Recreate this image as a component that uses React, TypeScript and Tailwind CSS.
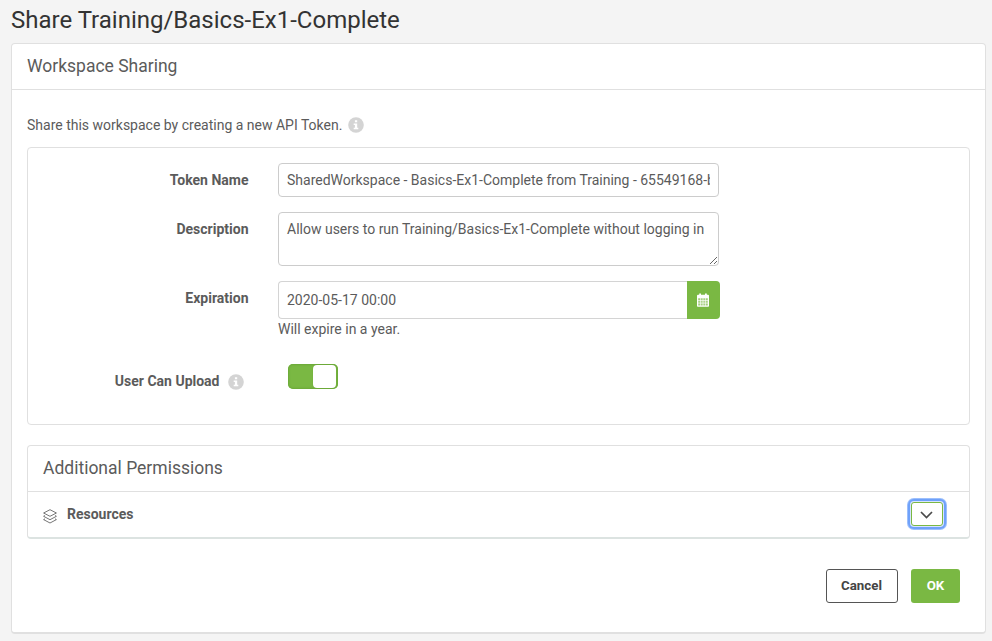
import React from "react";

function InfoIcon() {
  return (
    <svg width="16" height="16" viewBox="0 0 16 16" className="block">
      <circle cx="8" cy="8" r="7.8" fill="#d4d4d4" />
      <path d="M6.9 3.2h2.3v2H6.9zM5.7 6.5h3.5v4.3h1.1v1.5H5.7v-1.5h1.2V8H5.7z" fill="#fff" />
    </svg>
  );
}

function CalendarIcon() {
  return (
    <svg width="12" height="14" viewBox="0 0 12 14" className="block">
      <path
        fill="#fff"
        fillRule="evenodd"
        d="M1 1.8h1.200V.4h1.800v1.400h4V.4h1.800v1.400H11q1 0 1 1V13q0 .8-.8.8H.8Q0 13.800 0 13V2.800q0-1 1-1zM1.200 5.200v7.400h9.600V5.200z"
      />
      <path stroke="#fff" strokeWidth=".7" fill="none" d="M3.600 5v8M6 5v8M8.400 5v8M1 7.600h10M1 10.100h10" />
      <path fill="#fff" fillOpacity=".3" d="M1 5h10v8H1z" />
    </svg>
  );
}

function LayersIcon() {
  return (
    <svg width="14" height="15" viewBox="0 0 14 15" className="block" fill="none" stroke="#666" strokeWidth=".9" strokeLinejoin="round">
      <path d="M7 .7 13.400 4 7 7.300.6 4z" />
      <path d="M2 6.500.6 7.300 7 10.700l6.400-3.400L12 6.500" />
      <path d="M2 9.800l-1.400.8L7 14l6.400-3.400-1.400-.8" />
    </svg>
  );
}

export default function App() {
  return (
    <div className="h-[641px] w-[992px] overflow-hidden bg-[#f4f4f4] pl-[11px] font-['Roboto',sans-serif] text-[14px] leading-5 text-[#5b5b5b]">
      <h1 className="h-[43px] pt-1 text-[24px] leading-8 text-[#333]">Share Training/Basics-Ex1-Complete</h1>
      <main className="h-[591px] w-[975px] rounded border border-b-2 border-[#e0e0e0] bg-white">
        <h2 className="h-[46px] border-b border-[#e0e0e0] pl-[15px] pt-[10px] text-[17.5px] leading-6">Workspace Sharing</h2>
        <div className="px-[15px] pt-[25px]">
          <div className="flex h-[32px] items-start gap-[5.5px]">
            <p>Share this workspace by creating a new API Token.</p>
            <span className="pt-[2px]"><InfoIcon /></span>
          </div>
          <section className="h-[278px] w-[943px] rounded border border-[#e0e0e0] pt-[15px]">
            <div className="flex h-[49px]">
              <label className="w-[220.500px] pt-[7px] text-right font-bold">Token Name</label>
              <input
                className="ml-[29.500px] h-[34px] w-[441px] rounded border border-[#ccc] px-2 outline-none"
                defaultValue="SharedWorkspace - Basics-Ex1-Complete from Training - 65549168-bd"
              />
            </div>
            <div className="flex h-[69px]">
              <label className="w-[220.500px] pt-[7px] text-right font-bold">Description</label>
              <textarea
                className="ml-[29.500px] h-[54px] w-[441px] resize rounded border border-[#ccc] px-2 py-[6px] outline-none"
                defaultValue="Allow users to run Training/Basics-Ex1-Complete without logging in"
              />
            </div>
            <div className="flex h-[83px]">
              <label className="w-[220.500px] pt-[7px] text-right font-bold">Expiration</label>
              <div className="ml-[29.500px]">
                <div className="flex h-[38px] w-[442px]">
                  <div className="w-[409px] rounded-l border border-r-0 border-[#d4d4d4] px-2 pt-[8px]">2020-05-17 00:00</div>
                  <div className="flex w-[33px] items-center rounded-r bg-[#7ab843] pl-[10px]"><CalendarIcon /></div>
                </div>
                <p>Will expire in a year.</p>
              </div>
            </div>
            <div className="flex">
              <div className="flex w-[215.500px] justify-end gap-2 pt-[7px]">
                <label className="font-bold">User Can Upload</label>
                <span className="pt-[3px]"><InfoIcon /></span>
              </div>
              <div className="ml-[44.500px] flex h-[25px] w-[50px] items-center justify-end rounded-[5px] bg-[#7ab843] pr-[2px] shadow-[inset_0_0_2px_1px_#6aa938]">
                <div className="h-[23px] w-[23px] rounded bg-white shadow-[0_0_1px_#5f9730]" />
              </div>
            </div>
          </section>
          <section className="mt-5 h-[94px] w-[943px] rounded border border-b-2 border-[#e0e0e0] border-b-[#dce3e1]">
            <h3 className="h-[46px] border-b border-[#e0e0e0] pl-[15px] pt-[10px] text-[17.5px] leading-6">Additional Permissions</h3>
            <div className="flex h-[44px] items-center pl-[15px] pr-[26px]">
              <span className="mt-[4px]"><LayersIcon /></span>
              <span className="ml-[10px] font-bold">Resources</span>
              <button className="ml-auto flex h-[24px] w-[32px] items-center justify-center rounded-[3px] border border-[#7ab843] bg-white pr-[2px] shadow-[0_0_0_1px_#d6e4ff,0_0_0_3px_#6fa1fa,0_0_0_4px_#9cbffc]">
                <svg width="13" height="8" viewBox="0 0 13 8" className="mt-[2px]">
                  <path d="M1 1l5.500 5.500L12 1" fill="none" stroke="#4a4a4a" strokeWidth="1.700" />
                </svg>
              </button>
            </div>
          </section>
          <div className="mr-[10px] mt-[30px] flex h-[34px] justify-end gap-[13px]">
            <button className="w-[72px] rounded-[3px] border border-[#555] pr-px text-[13.300px] font-bold text-[#444]">Cancel</button>
            <button className="w-[49px] rounded-[3px] bg-[#7ab843] text-[13.300px] font-bold text-white">OK</button>
          </div>
        </div>
      </main>
    </div>
  );
}
